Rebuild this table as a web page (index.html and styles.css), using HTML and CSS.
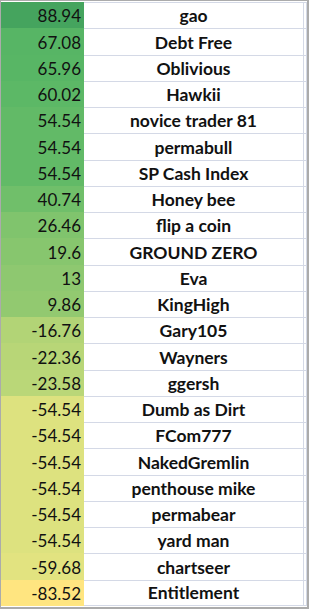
FILE: index.html
```html
<!DOCTYPE html>
<html>
<head>
<meta charset="utf-8">
<link rel="stylesheet" href="styles.css">
</head>
<body>
<div class="frame">
  <div class="sheet">
    <div class="num" style="background:#45a45e">88.94</div><div class="name">gao</div><div class="edge"></div>
    <div class="num" style="background:#57b565">67.08</div><div class="name">Debt Free</div><div class="edge"></div>
    <div class="num" style="background:#58b665">65.96</div><div class="name">Oblivious</div><div class="edge"></div>
    <div class="num" style="background:#5cb866">60.02</div><div class="name">Hawkii</div><div class="edge"></div>
    <div class="num" style="background:#62ba67">54.54</div><div class="name">novice trader 81</div><div class="edge"></div>
    <div class="num" style="background:#62ba67">54.54</div><div class="name">permabull</div><div class="edge"></div>
    <div class="num" style="background:#62ba67">54.54</div><div class="name">SP Cash Index</div><div class="edge"></div>
    <div class="num" style="background:#70bf6a">40.74</div><div class="name">Honey bee</div><div class="edge"></div>
    <div class="num" style="background:#80c46d">26.46</div><div class="name">flip a coin</div><div class="edge"></div>
    <div class="num" style="background:#87c66e">19.6</div><div class="name">GROUND ZERO</div><div class="edge"></div>
    <div class="num" style="background:#8ec870">13</div><div class="name">Eva</div><div class="edge"></div>
    <div class="num" style="background:#92c970">9.86</div><div class="name">KingHigh</div><div class="edge"></div>
    <div class="num" style="background:#b2d476">-16.76</div><div class="name">Gary105</div><div class="edge"></div>
    <div class="num" style="background:#b8d677">-22.36</div><div class="name">Wayners</div><div class="edge"></div>
    <div class="num" style="background:#bad778">-23.58</div><div class="name">ggersh</div><div class="edge"></div>
    <div class="num" style="background:#dde27f">-54.54</div><div class="name">Dumb as Dirt</div><div class="edge"></div>
    <div class="num" style="background:#dde27f">-54.54</div><div class="name">FCom777</div><div class="edge"></div>
    <div class="num" style="background:#dde27f">-54.54</div><div class="name">NakedGremlin</div><div class="edge"></div>
    <div class="num" style="background:#dde27f">-54.54</div><div class="name">penthouse mike</div><div class="edge"></div>
    <div class="num" style="background:#dde27f">-54.54</div><div class="name">permabear</div><div class="edge"></div>
    <div class="num" style="background:#dde27f">-54.54</div><div class="name">yard man</div><div class="edge"></div>
    <div class="num" style="background:#e2e380">-59.68</div><div class="name">chartseer</div><div class="edge"></div>
    <div class="num last" style="background:#ffe580">-83.52</div><div class="name last">Entitlement</div><div class="edge last"></div>
  </div>
</div>
</body>
</html>
```

FILE: styles.css
```css
html, body {
  margin: 0;
  padding: 0;
  background: #ffffff;
}

.frame {
  width: 309px;
  height: 609px;
  box-sizing: border-box;
  border-style: solid;
  border-color: #ababab;
  border-width: 1px 2px 2px 1px;
  padding: 1px 0 1px 0;
  background: #ffffff;
}

.sheet {
  display: grid;
  grid-template-columns: 83px 220px 3px;
  grid-template-rows: repeat(23, 1fr);
  height: 604px;
  font-family: Lato, "Liberation Sans", sans-serif;
  color: #111111;
}

.num {
  display: flex;
  align-items: flex-end;
  justify-content: flex-end;
  padding: 0 3px 2px 0;
  font-size: 17px;
  line-height: 20px;
}

.name {
  display: flex;
  align-items: flex-end;
  justify-content: center;
  padding-bottom: 2px;
  box-sizing: border-box;
  border-top: 1px solid #d4d9e6;
  border-right: 1px solid #d4d9e6;
  font-size: 17.5px;
  font-weight: 700;
  line-height: 20px;
  white-space: nowrap;
}

.edge {
  box-sizing: border-box;
  border-top: 1px solid #d4d9e6;
  border-right: 1px solid #d4d9e6;
}

.name.last,
.edge.last {
  border-bottom: 1px solid #d4d9e6;
}
```
